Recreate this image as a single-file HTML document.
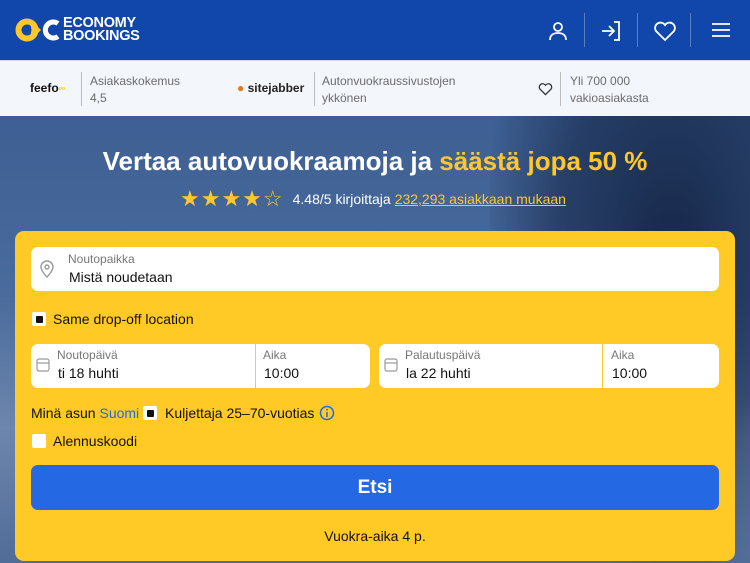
<!DOCTYPE html>
<html><head><meta charset="utf-8"><style>
*{box-sizing:border-box;margin:0;padding:0}
body{width:750px;height:563px;overflow:hidden;font-family:"Liberation Sans",sans-serif;background:#2c4a7c;position:relative}
.hdr{position:absolute;left:0;top:0;width:750px;height:60px;background:#1147ab}
.logo{position:absolute;left:15px;top:17px}
.brand{position:absolute;left:63px;top:17px;color:#fff;font-weight:bold;font-size:14.5px;line-height:13px;letter-spacing:-0.3px}
.sep{position:absolute;top:13px;width:1px;height:34px;background:#5b7fc5}
.bar{position:absolute;left:0;top:60px;width:750px;height:56px;background:#f3f6fb;border-top:1px solid #d0d8e8}
.bar .t{position:absolute;top:12px;font-size:12px;color:#6b6b6b;line-height:17px}
.bar .vs{position:absolute;top:11px;width:1px;height:34px;background:#bbb}
.hero{position:absolute;left:0;top:116px;width:750px;height:447px;background:linear-gradient(180deg,#3d5f93 0%,#4a6b9c 40%,#6d86ad 70%,#506c98 100%)}
.trees{position:absolute;right:0;top:116px;width:260px;height:447px;background:radial-gradient(ellipse at 70% 30%,#16284a 0%,rgba(22,40,74,.6) 45%,rgba(22,40,74,0) 75%)}
h1{position:absolute;left:0;top:146px;width:750px;text-align:center;color:#fff;font-size:26px;font-weight:bold}
h1 span{color:#ffc72c}
.rate{position:absolute;left:180px;top:189px;color:#fff;font-size:14px;display:flex;align-items:center}
.rate .st{color:#ffc72c;font-size:22px;letter-spacing:1px;margin-right:9px;line-height:20px}
.rate a{color:#ffc72c;text-decoration:underline;margin-left:4px}
.card{position:absolute;left:15px;top:231px;width:720px;height:330px;background:#ffc926;border-radius:9px}
.inp{position:absolute;background:#fff;border-radius:7px}
.lbl{position:absolute;font-size:12px;color:#777}
.val{position:absolute;font-size:14px;color:#111}
.cb{position:absolute;width:14px;height:14px;background:#fff;border-radius:2px}
.cb.on::after{content:"";position:absolute;left:3.5px;top:3.5px;width:7px;height:7px;background:#111;border-radius:1px}
.txt{position:absolute;font-size:14px;color:#111}
.btn{position:absolute;left:16px;top:234px;width:688px;height:45px;background:#2468e4;border-radius:7px;color:#fff;font-weight:bold;font-size:19px;text-align:center;line-height:45px}
</style></head><body>
<div class="hdr">
<svg class="logo" width="46" height="26" viewBox="0 0 46 26"><circle cx="12" cy="13" r="8.5" stroke="#ffc72c" stroke-width="6" fill="none"/><path d="M16 3l10 10-10 10z" fill="#ffc72c"/><circle cx="12" cy="13" r="4.5" fill="#1147ab"/><path d="M43 6.5a8 8 0 1 0 0 13" stroke="#fff" stroke-width="5" fill="none"/></svg>
<div class="brand">ECONOMY<br>BOOKINGS</div>
<svg style="position:absolute;left:547px;top:20px" width="22" height="22" viewBox="0 0 22 22" fill="none" stroke="#fff" stroke-width="1.8"><circle cx="11" cy="7" r="4"/><path d="M3 20c0-5 3.5-7 8-7s8 2 8 7"/></svg>
<div class="sep" style="left:584px"></div>
<svg style="position:absolute;left:600px;top:20px" width="22" height="22" viewBox="0 0 22 22" fill="none" stroke="#fff" stroke-width="1.8"><path d="M2 11h11M9 6l5 5-5 5M14 2h5v18h-5"/></svg>
<div class="sep" style="left:637px"></div>
<svg style="position:absolute;left:653px;top:20px" width="24" height="22" viewBox="0 0 24 22" fill="none" stroke="#fff" stroke-width="1.8"><path d="M12 20L3 11a5 5 0 0 1 9-6 5 5 0 0 1 9 6z"/></svg>
<div class="sep" style="left:690px"></div>
<svg style="position:absolute;left:711px;top:21px" width="20" height="18" viewBox="0 0 20 18" stroke="#fff" stroke-width="1.8"><path d="M1 3h18M1 9h18M1 15h18"/></svg>
</div>
<div class="bar">
<div style="position:absolute;left:30px;top:20px;font-weight:bold;font-size:12px;color:#111">feefo<span style="color:#ffc72c;font-size:8px">ᵒᵒ</span></div>
<div class="vs" style="left:81px"></div>
<div class="t" style="left:90px">Asiakaskokemus<br>4,5</div>
<div style="position:absolute;left:237px;top:20px;font-weight:bold;font-size:12px;color:#222"><span style="color:#e07a20">●</span> sitejabber</div>
<div class="vs" style="left:314px"></div>
<div class="t" style="left:322px">Autonvuokraussivustojen<br>ykkönen</div>
<svg style="position:absolute;left:538px;top:21px" width="15" height="14" viewBox="0 0 24 22" fill="none" stroke="#333" stroke-width="2"><path d="M12 20L3 11a5 5 0 0 1 9-6 5 5 0 0 1 9 6z"/></svg>
<div class="vs" style="left:560px"></div>
<div class="t" style="left:570px">Yli 700 000<br>vakioasiakasta</div>
</div>
<div class="hero"></div><div class="trees"></div>
<h1>Vertaa autovuokraamoja ja <span>säästä jopa 50 %</span></h1>
<div class="rate"><span class="st">★★★★☆</span>4.48/5 kirjoittaja <a>232,293 asiakkaan mukaan</a></div>
<div class="card">
<div class="inp" style="left:16px;top:16px;width:688px;height:44px">
<svg style="position:absolute;left:9px;top:13px" width="14" height="18" viewBox="0 0 14 18" fill="none" stroke="#999" stroke-width="1.4"><path d="M7 17s6-6 6-10A6 6 0 0 0 1 7c0 4 6 10 6 10z"/><circle cx="7" cy="7" r="2"/></svg>
<div class="lbl" style="left:37px;top:5px">Noutopaikka</div><div class="val" style="left:38px;top:22px">Mistä noudetaan</div></div>
<div class="cb on" style="left:17px;top:81px"></div><div class="txt" style="left:38px;top:80px">Same drop-off location</div>
<div class="inp" style="left:16px;top:113px;width:339px;height:44px">
<svg style="position:absolute;left:5px;top:14px" width="14" height="14" viewBox="0 0 14 14" fill="none" stroke="#999" stroke-width="1.2"><rect x="1" y="1" width="12" height="12" rx="2"/><path d="M1 5h12"/></svg>
<div class="lbl" style="left:26px;top:4px">Noutopäivä</div><div class="val" style="left:27px;top:21px">ti 18 huhti</div>
<div style="position:absolute;left:224px;top:0;width:1px;height:44px;background:#ffc926"></div>
<div class="lbl" style="left:232px;top:4px">Aika</div><div class="val" style="left:233px;top:21px">10:00</div></div>
<div class="inp" style="left:364px;top:113px;width:340px;height:44px">
<svg style="position:absolute;left:5px;top:14px" width="14" height="14" viewBox="0 0 14 14" fill="none" stroke="#999" stroke-width="1.2"><rect x="1" y="1" width="12" height="12" rx="2"/><path d="M1 5h12"/></svg>
<div class="lbl" style="left:26px;top:4px">Palautuspäivä</div><div class="val" style="left:27px;top:21px">la 22 huhti</div>
<div style="position:absolute;left:223px;top:0;width:1px;height:44px;background:#ffc926"></div>
<div class="lbl" style="left:232px;top:4px">Aika</div><div class="val" style="left:233px;top:21px">10:00</div></div>
<div class="txt" style="left:16px;top:174px">Minä asun <span style="color:#2468e4">Suomi</span></div>
<div class="cb on" style="left:128px;top:175px"></div><div class="txt" style="left:150px;top:174px">Kuljettaja 25–70-vuotias</div>
<svg style="position:absolute;left:304px;top:174px" width="16" height="16" viewBox="0 0 16 16" fill="none" stroke="#2468e4" stroke-width="1.5"><circle cx="8" cy="8" r="6.5"/><path d="M8 7v5M8 4v1.5"/></svg>
<div class="cb" style="left:17px;top:203px"></div><div class="txt" style="left:38px;top:202px">Alennuskoodi</div>
<div class="btn">Etsi</div>
<div class="txt" style="left:0;width:720px;text-align:center;top:297px">Vuokra-aika 4 p.</div>
</div>
</body></html>
